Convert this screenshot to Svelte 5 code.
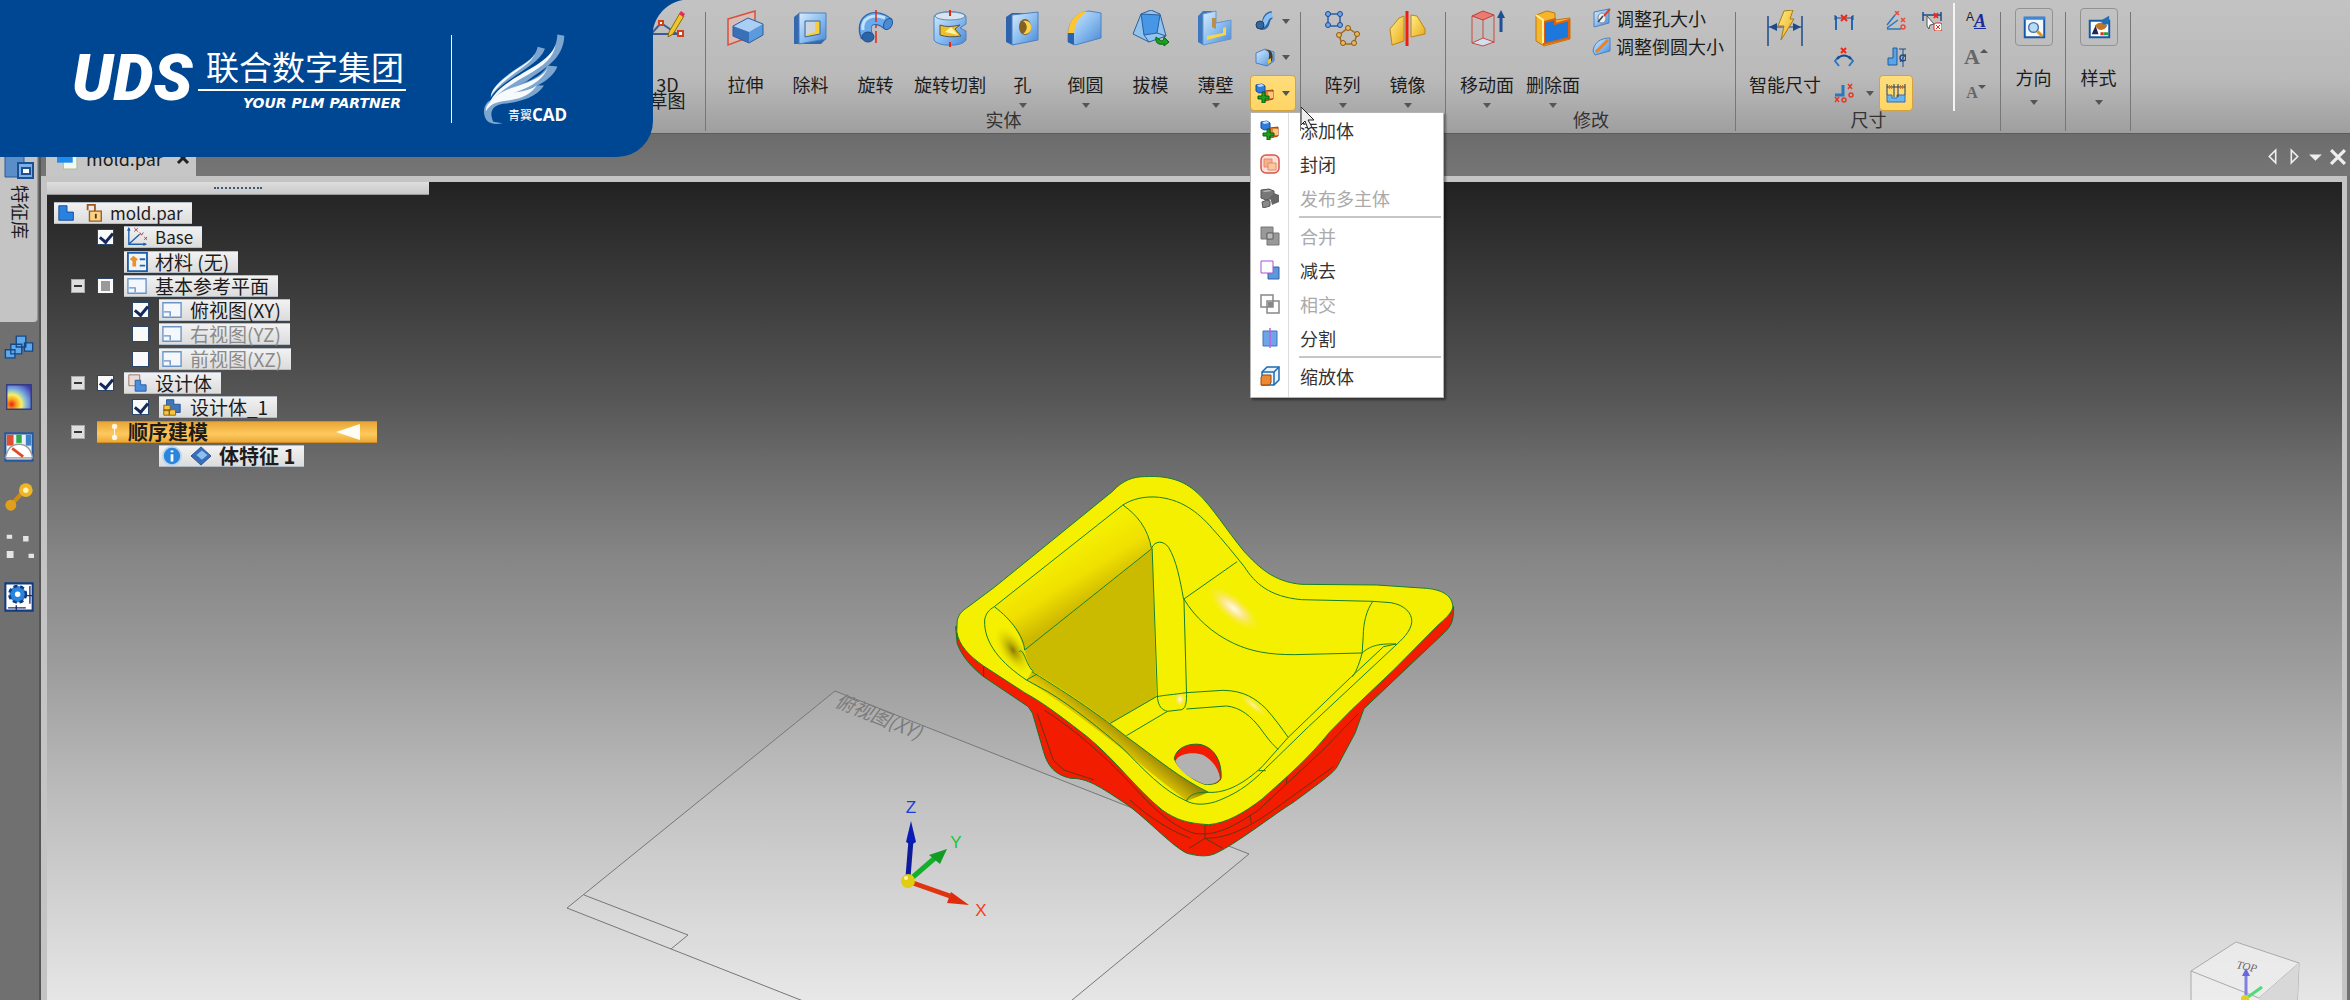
<script lang="ts">
	type MenuItem = { label: string; icon: string; disabled?: boolean; separator?: boolean };
	type TreeRow = {
		text: string;
		icons: string[];
		indent: number;
		expander?: boolean;
		check?: 'on' | 'off' | 'mixed';
		dim?: boolean;
		bold?: boolean;
		active?: boolean;
	};

	// Inner markup of the ribbon icons, drawn on a 36x36 grid
	const big: Record<string, string> = {
		sketch3d: `<path d="M2 24 12 13 28 24Z" fill="none" stroke="#3b5a92" stroke-width="2"/><path d="M20 22 31 3l4 3-11 18-5 3z" fill="#f0c52c" stroke="#8a6a10"/><path d="m30 4 2-3 4 3-2 3z" fill="#e03050"/><path d="M10 11h4v4h-4zM29 21h5v5h-5z" fill="#fff" stroke="#d4401c" stroke-width="2"/>`,
		extrude: `<path d="M1 9 28 1v24L1 35z" fill="#d8bcb8" stroke="#d8503c" stroke-width="1.500"/><path d="m6 16 15-8 15 6-14 8z" fill="#a9d0f4"/><path d="m6 16 16 6v11L6 26z" fill="#3a70b8"/><path d="m22 22 14-8v11l-14 8z" fill="#5c9ade"/><path d="m6 16 15-8 15 6v11l-14 8-16-7z" fill="none" stroke="#2c5e9e"/>`,
		cut: `<path d="m2 7 5-4h27v26l-5 5H2z" fill="#3568ae"/><path d="M7 3h27v26l-27 5z" fill="url(#blue)" stroke="#4a80c2"/><path d="M13 11h15v13l-15 3z" fill="#f6cf38" stroke="#3c66a0"/><path d="M14 12h9v10l-9 3z" fill="#ccd4dc"/>`,
		revolve: `<path d="M10 27C3 9 18 3 31 14" fill="none" stroke="#2a62a8" stroke-width="13"/><path d="M10 26C4 9 18 4 30 13" fill="none" stroke="#6aaaec" stroke-width="11"/><path d="M6 20C4 8 16 3 28 8" fill="none" stroke="#c4e2fa" stroke-width="3"/><ellipse cx="31" cy="14" rx="4" ry="6" fill="#4a8cd4" stroke="#255a9b" transform="rotate(30 31 14)"/><ellipse cx="11" cy="27" rx="6" ry="5" fill="#2c64a8" stroke="#1f4c88"/><path d="M19 0v36" stroke="#e02818" stroke-width="1.500" stroke-dasharray="12 3 3 3"/>`,
		revcut: `<path d="M2 7c0-7 32-7 32 0v7l-6 4 6 3v9c-3 7-29 7-32 0z" fill="url(#blue)" stroke="#4a80c2"/><ellipse cx="18" cy="6" rx="15" ry="4" fill="#d7e5ee" stroke="#678bb0"/><path d="M8 15q8 3 20 0l-5 4 6 7q-12 2-21-1z" fill="#edc02a" stroke="#555"/><path d="m13 22 6-5 7 8z" fill="#fff3a5"/><path d="M18 0v6m0 26v5" stroke="#e02818" stroke-width="2"/>`,
		hole: `<path d="m2 7 6-4h26v26l-26 6-6-3z" fill="#2d62ad"/><path d="M8 5 34 2v28L8 35z" fill="url(#blue)" stroke="#4a80c2"/><ellipse cx="21" cy="17" rx="6" ry="8" fill="#856023"/><path d="M19 11c5 3 5 9 0 13 12 1 10-16 0-13z" fill="#f7d44a"/>`,
		round: `<path d="M1 26C1 10 11 2 22 1l12 2v25L8 35l-7-3z" fill="url(#blue)" stroke="#4d82c0"/><path d="M1 23C2 10 10 2 20 1l-4 4C9 10 8 16 7 24z" fill="#ffc62e"/><path d="M1 23h6v12l-6-3z" fill="#2d62ad"/>`,
		draft: `<path d="M9 4 19 0l9 4 6 22-17 6L1 24z" fill="#90c4ef" stroke="#2d5e9e"/><path d="m9 4 19 1-3 18-13 2z" fill="#4697e6" stroke="#2d5e9e"/><path d="m12 25 5 7M25 23l9 3" stroke="#2d5e9e"/><path d="m24 27 4 3c2 2 4 0 4-3l5 5-5 4v-2c-6 1-9-1-8-7z" fill="#19a01c" stroke="#0b6511"/>`,
		thin: `<path d="m1 6 5-5h13v12l15-3v19L6 35l-5-3z" fill="#3e77bf"/><path d="m6 4 13-3v12l15-3v19L6 35z" fill="url(#blue)" stroke="#6a98cc"/><path d="m10 26 16-3v-5l3-1v8l-19 5z" fill="#f8d448"/><path d="M15 8v9l4 2V8z" fill="#b98d4c"/>`,
		pattern: `<g fill="none" stroke="#2c5da8" stroke-width="1.500"><path d="M4 4h12v12H4z"/><path d="m24 18 9 6-3 10H18l-3-9z" stroke="#a36a18"/></g><g fill="#6fa7e8" stroke="#1c4990"><circle cx="4" cy="4" r="2.500"/><circle cx="16" cy="4" r="2.500"/><circle cx="4" cy="15" r="2.500"/><circle cx="16" cy="15" r="2.500"/></g><g fill="#edb459" stroke="#8a5a14"><circle cx="24" cy="18" r="2.500"/><circle cx="33" cy="24" r="2.500"/><circle cx="30" cy="33" r="2.500"/><circle cx="19" cy="33" r="2.500"/><circle cx="15" cy="25" r="2.500"/></g>`,
		mirror: `<path d="M1 19 10 8l5-2v25L3 35z" fill="url(#gold)" stroke="#b8861c"/><path d="m22 5 6 1 8 13v5l-14 3z" fill="url(#gold)" stroke="#b8861c"/><path d="M18 1v35" stroke="#f01c10" stroke-width="3"/>`,
		moveface: `<path d="M3 6 14 1l11 4-11 5z" fill="#e87c74" stroke="#c43c34"/><path d="M3 6v27m22-28v28M14 10v19" stroke="#cc4840"/><path d="m3 33 11-5 11 4-11 4z" fill="#d0e0ee" stroke="#cc4840"/><path d="M32 22V6" stroke="#1f4f96" stroke-width="3"/><path d="m32 0 4 8h-8z" fill="#1f4f96"/>`,
		delface: `<path d="m1 5 11-4 8 2v7l15-2v21L9 36l-8-5z" fill="#f5b62c" stroke="#c07810"/><path d="m9 12 11-3v5l14-4v18L9 34z" fill="#1c78dc" stroke="#e06010" stroke-width="2"/><path d="m1 5 7 5v23" fill="none" stroke="#fff09a" stroke-width="2"/>`,
		smartdim: `<path d="M1 6v30M35 6v30" stroke="#1e4a8a" stroke-width="1.500"/><path d="M1 17h34" stroke="#1e4a8a"/><path d="m2 17 8-4v8zm32 0-8-4v8z" fill="#1e4a8a"/><path d="m17 1 9-1-3 9h4L14 30l3-14h-6z" fill="url(#gold)" stroke="#a87c10"/>`,
		orient: `<path d="M9 9h20v20H9z" fill="#f4f8fc" stroke="#1458a8" stroke-width="2"/><path d="M8 8h22v3H8z" fill="#3a88d8"/><circle cx="18" cy="19" r="5" fill="#b8dcf8" stroke="#4878a8" stroke-width="1.500"/><path d="m22 23 5 5" stroke="#e0961c" stroke-width="3"/>`,
		style: `<path d="M9 12h20v17H9z" fill="#fff" stroke="#1458a8" stroke-width="2"/><path d="M11 26h7l-3-9z" fill="#1c2850"/><path d="M20 24h3v3h-3z" fill="#e03020"/><path d="M23 24h5v3h-5z" fill="#2a9c3a"/><path d="M14 17q7-6 13 0-3 6-9 4z" fill="#c27428"/><path d="m20 12 9-5v9h-6z" fill="#1e70b8"/>`
	};

	// 20x20 grid
	const small: Record<string, string> = {
		sweep: `<path d="M6 15C14 16 8 5 17 4" fill="none" stroke="#2b65aa" stroke-width="8"/><path d="M5 14C13 15 8 5 17 4" fill="none" stroke="#8cc0f2" stroke-width="5"/><circle cx="5" cy="14" r="4" fill="#34689c" stroke="#1c4070"/>`,
		sweepcut: `<path d="m1 6 9-4 9 3v9l-7 5-11-3z" fill="url(#blue)" stroke="#4a80c2"/><path d="M8 4c7-2 7 3 5 12l4-2c2-8-1-13-9-10z" fill="#4a3a20"/><path d="m13 13 3-2v4l-3 2z" fill="#f2c430"/>`,
		add: `<path d="m1 2 6-1 3 2v6L4 10 1 8z" fill="#2f7ce0" stroke="#134a9c"/><path d="m2 2 5-1 2 2-5 1z" fill="#bfe0ff"/><path d="m10 8 8-1v9l-8 2z" fill="#e8813a" stroke="#9c3c0c"/><path d="M13 9h5v6h-5z" fill="#ffc878"/><path d="M7 9h3v4h4v3h-4v4H7v-4H3v-3h4z" fill="#1da01f" stroke="#0b6010"/>`,
		enclose: `<rect x="1" y="1" width="18" height="18" rx="5" fill="#fbe1da" stroke="#d85648" stroke-width="1.500"/><path d="M4 5h8v8H4z" fill="#f7b08c" stroke="#e08c68"/><path d="M8 9h8v7H8z" fill="#fbc8a0" stroke="#e08c68"/>`,
		publish: `<path d="m1 2 8-1 5 2v7l-8 2-5-2z" fill="#777" stroke="#555"/><path d="m10 9 4-4 5 2v7l-7 3z" fill="#666"/><path d="m2 14 5-2 3 1v5l-7 2z" fill="#8a8a8a" stroke="#555"/><path d="m2 3 7-1 3 1-7 1z" fill="#bbb"/>`,
		union: `<path d="M1 1h12v12H1zM7 7h12v12H7z" fill="#999" stroke="#777"/><path d="M7 7h6v6H7z" fill="#bbb" stroke="#666"/>`,
		subtract: `<path d="M8 7h11v12H8z" fill="#5d97dc" stroke="#3463a8"/><path d="M1 1h12v12H1z" fill="#fff" stroke="#a650d8"/>`,
		intersect: `<path d="M1 1h12v12H1zM7 7h12v12H7z" fill="none" stroke="#888" stroke-width="1.500"/><path d="M8 8h5v5H8z" fill="#888"/>`,
		split: `<path d="M3 3h14v15H3z" fill="#6da5e8" stroke="#3e74bc"/><path d="M10 0v20" stroke="#c060e0" stroke-width="1.500"/>`,
		scale: `<path d="m2 6 5-5h12v13l-5 5H2z" fill="#e8f4ff" stroke="#1c6ab0" stroke-width="1.500"/><path d="M2 6h12v13M14 6l5-5" fill="none" stroke="#1c6ab0" stroke-width="1.500"/><path d="m1 11 2-2h8v8l-2 2H1z" fill="#ec8a34" stroke="#a0480c"/>`,
		holesize: `<path d="m2 4 15-3v14L2 19z" fill="url(#blue)" stroke="#4a80c2"/><ellipse cx="10" cy="10" rx="4" ry="5" fill="#eee" stroke="#888"/><path d="m12 8 6-7" stroke="#e04028" stroke-width="2"/><path d="m6 14 5-6" stroke="#345" stroke-width="1.500"/>`,
		roundsize: `<path d="M1 15C2 7 8 2 18 2v13L3 19z" fill="url(#blue)" stroke="#4a80c2"/><path d="M4 16 16 4" stroke="#e98324" stroke-width="3"/>`,
		dist: `<path d="M2 19V5m16 14V5" stroke="#1e6ab8" stroke-width="2"/><path d="M2 7h16M1 4v5m18-5v5" stroke="#1e4a8a"/><path d="m7 4 6 6m0-6-6 6" stroke="#f02818" stroke-width="2"/>`,
		angle: `<path d="M5 19 1 14l4-5m10 10 4-5-4-5" fill="none" stroke="#2878c0" stroke-width="2"/><path d="M3 12q7-7 14 0" fill="none" stroke="#1e4a8a" stroke-width="2"/><path d="m7 1 5 5m0-5-5 5" stroke="#f02818" stroke-width="2"/>`,
		coord: `<path d="M1 12h8V2" fill="none" stroke="#2878c0" stroke-width="3"/><g fill="none" stroke="#e83828" stroke-width="1.500"><path d="m14 1 4 5m0-5-4 5M1 14l4 5m0-5-4 5"/><circle cx="17" cy="12" r="2"/><circle cx="10" cy="17" r="2"/></g>`,
		angcoord: `<path d="M1 18h14M1 17 12 9M1 14 9 4" stroke="#2878c0" stroke-width="1.500"/><g fill="none" stroke="#f04838" stroke-width="1.500"><path d="m9 0 4 4m0-4-4 4m6 3 4 4m0-4-4 4"/><circle cx="17" cy="16" r="2"/></g>`,
		symdia: `<path d="M2 18h9V1H7v10H2z" fill="#58a4e4" stroke="#1e5aa0"/><path d="M13 2h7m-3 0v18" stroke="#1e4a8a"/><circle cx="17" cy="11" r="3" fill="none" stroke="#1e4a8a" stroke-width="1.500"/><path d="m14 15 6-8" stroke="#1e4a8a"/>`,
		autodim: `<path d="M1 12h5v3h5v-3h8v7H1z" fill="#6cb4ee" stroke="#2a70b8"/><path d="M1 1v11M8 1v13M12 1v13M19 1v11M1 4h18" stroke="#1e3a60"/><path d="m3 2 3 4m0-4-3 4m11-4 3 4m0-4-3 4" stroke="#d86818"/>`,
		attach: `<path d="M1 1v9M19 1v9M1 4h18" stroke="#1e4a8a" stroke-width="1.500"/><path d="m12 2 4 5m0-5-4 5" stroke="#f02818" stroke-width="2"/><path d="m5 5 7 8-4 1-1 4-2-3z" fill="#fff" stroke="#555"/><rect x="12" y="12" width="8" height="8" rx="2" fill="#fff" stroke="#d03020"/><path d="m14 14 4 4m0-4-4 4" stroke="#d03020"/>`
	};

	// 22x22 grid, shared by the feature tree and the dock
	const tree: Record<string, string> = {
		part: `<path d="M2 3h9v7h7v9H2z" fill="#2a82e0" stroke="#154a94"/>`,
		base: `<path d="M2 1v18h19M3 18 14 8" fill="none" stroke="#2060b0" stroke-width="1.500"/><path d="m2 0 2 4H0zM22 19l-4 2v-4z" fill="#2060b0"/><path d="m8 1 4 4m0-4-4 4m6 1 2 3 2-3m1 5 3 3m0-3-3 3" stroke="#a83030" fill="none"/>`,
		material: `<path d="M1 1h21v20H1z" fill="#eef4fa" stroke="#1c5ca8" stroke-width="2"/><path d="m7 4 5 4-2 2v6H6v-6L3 8z" fill="#e8922c"/><path d="M14 8h6m-6 7h6" stroke="#2864a8" stroke-width="2"/>`,
		plane: `<path d="M1 3h20v16H1z" fill="#f4f8fd" stroke="#6a94c8" stroke-width="1.500"/><path d="M2 13h7v5" fill="none" stroke="#6a94c8" stroke-width="1.500"/>`,
		bodies: `<path d="M2 2h12v12H2z" fill="#e8dcd6" stroke="#9c6c60"/><path d="M9 8h6v5h6v7H9z" fill="#4a8ee0" stroke="#2458a0"/>`,
		body: `<path d="M5 3h8v5h7v9H5z" fill="#3f78c0" stroke="#234f90"/><path d="M2 9h7v6H2zM2 14h6v6H2zM8 14h7v6H8z" fill="#f8c63c" stroke="#875c10"/>`,
		dots: `<circle cx="16" cy="5" r="3" fill="#fff4d8"/><circle cx="16" cy="17" r="3" fill="#fff4d8"/><path d="M16 5v12" stroke="#fff" />`,
		info: `<circle cx="11" cy="11" r="10" fill="#2a86dc" stroke="#b8d4ee" stroke-width="2"/><path d="M11 9v8m0-12v2" stroke="#fff" stroke-width="3"/>`,
		feature: `<path d="m0 11 11-10 11 10-11 10z" fill="#3a6eb8" stroke="#24508c"/><path d="m6 10 6-5 6 5-6 5z" fill="#8cc0f0"/>`,
		pieces: `<g fill="#5ea8ec" stroke="#164888"><path d="M9 3h7v8H9zM15 8h6v6h-6zM5 9h8v7H5zM1 13h7v6H1z"/></g>`,
		heat: `<path d="M2 2h18v18H2z" fill="url(#heat)" stroke="#333a80"/>`,
		gauge: `<path d="M1 1h20v20H1z" fill="#e8f0f8" stroke="#2458a0" stroke-width="1.500"/><path d="M2 2h5v8H2z" fill="#e05030"/><path d="M9 2h4v6H9z" fill="#30a848"/><path d="M16 2h4v8h-4z" fill="#4080c8"/><path d="M1 19q2-10 10-10t10 10z" fill="#fff" stroke="#999"/><path d="m6 12 8 6" stroke="#e04828" stroke-width="2"/>`,
		link: `<path d="M5 17 16 5" stroke="#cc8c14" stroke-width="3"/><circle cx="16" cy="6" r="5" fill="#f0b428"/><circle cx="5" cy="17" r="4" fill="#dfa01c"/><circle cx="16" cy="6" r="2" fill="#fff4b0"/>`,
		nodes: `<path d="M2 2h4v3H2zM14 3h4v4h-4zM2 14h5v5H2zM18 16h4v3h-4z" fill="#e4e4e4"/>`,
		gear: `<path d="M1 1h20v20H1z" fill="#fff" stroke="#123c80" stroke-width="1.500"/><circle cx="10" cy="9" r="6" fill="#2a84dc" stroke="#123c80" stroke-width="2" stroke-dasharray="3 2"/><circle cx="10" cy="9" r="5" fill="#2a84dc"/><circle cx="10" cy="9" r="2" fill="#fff"/><path d="M19 3v13M3 19h13M16 10h5M9 17v4" stroke="#1c2c70"/>`
	};

	const solidButtons = [
		{ label: '拉伸', icon: 'extrude' },
		{ label: '除料', icon: 'cut' },
		{ label: '旋转', icon: 'revolve' },
		{ label: '旋转切割', icon: 'revcut' },
		{ label: '孔', icon: 'hole', arrow: true },
		{ label: '倒圆', icon: 'round', arrow: true },
		{ label: '拔模', icon: 'draft' },
		{ label: '薄壁', icon: 'thin', arrow: true }
	];

	const menuItems: MenuItem[] = [
		{ label: '添加体', icon: 'add' },
		{ label: '封闭', icon: 'enclose' },
		{ label: '发布多主体', icon: 'publish', disabled: true, separator: true },
		{ label: '合并', icon: 'union', disabled: true },
		{ label: '减去', icon: 'subtract' },
		{ label: '相交', icon: 'intersect', disabled: true },
		{ label: '分割', icon: 'split', separator: true },
		{ label: '缩放体', icon: 'scale' }
	];

	const rows: TreeRow[] = [
		{ text: 'Base', icons: ['base'], indent: 43, check: 'on' },
		{ text: '材料 (无)', icons: ['material'], indent: 70 },
		{ text: '基本参考平面', icons: ['plane'], indent: 17, expander: true, check: 'mixed' },
		{ text: '俯视图(XY)', icons: ['plane'], indent: 78, check: 'on' },
		{ text: '右视图(YZ)', icons: ['plane'], indent: 78, check: 'off', dim: true },
		{ text: '前视图(XZ)', icons: ['plane'], indent: 78, check: 'off', dim: true },
		{ text: '设计体', icons: ['bodies'], indent: 17, expander: true, check: 'on' },
		{ text: '设计体_1', icons: ['body'], indent: 78, check: 'on' },
		{ text: '顺序建模', icons: ['dots'], indent: 17, expander: true, bold: true, active: true },
		{ text: '体特征 1', icons: ['info', 'feature'], indent: 105, bold: true }
	];

	const dock = [
		{ label: '零件族', icon: 'pieces' },
		{ label: '仿真', icon: 'heat' },
		{ label: '传感器', icon: 'gauge' },
		{ label: '链接', icon: 'link' },
		{ label: '节点', icon: 'nodes' },
		{ label: '工程参考', icon: 'gear' }
	];

	let menuOpen = $state(true);
</script>

{#snippet bigButton(label: string, icon: string, arrow = false)}
	<button class="big">
		<svg class="big-icon" viewBox="0 0 37 37" aria-hidden="true">{@html big[icon]}</svg>
		<span class="big-label">{label}</span>
		{#if arrow}<i class="arrow"></i>{/if}
	</button>
{/snippet}

{#snippet smallButton(label: string, icon: string, highlight = false)}
	<button class="small" class:highlight aria-label={label}>
		<svg class="small-icon" viewBox="0 0 20 20" aria-hidden="true">{@html small[icon]}</svg>
	</button>
{/snippet}

<svg class="defs" aria-hidden="true">
	<defs>
		<linearGradient id="blue" x1="0" y1="0" x2="1" y2="1">
			<stop offset="0" stop-color="#d8ebfb" />
			<stop offset="0.5" stop-color="#8dbff0" />
			<stop offset="1" stop-color="#4a88d4" />
		</linearGradient>
		<linearGradient id="gold" x1="0" y1="0" x2="1" y2="1">
			<stop offset="0" stop-color="#fff08a" />
			<stop offset="1" stop-color="#eba918" />
		</linearGradient>
		<radialGradient id="heat" cx="0.2" cy="0.8" r="1">
			<stop offset="0" stop-color="#f02010" />
			<stop offset="0.2" stop-color="#f8a020" />
			<stop offset="0.4" stop-color="#f8f060" />
			<stop offset="0.6" stop-color="#80b8e0" />
			<stop offset="1" stop-color="#4038b0" />
		</radialGradient>
	</defs>
</svg>

<div class="app">
	<header class="ribbon">
		<div class="group sketch">
			<button class="big">
				<svg class="big-icon" viewBox="0 0 37 37" aria-hidden="true">{@html big.sketch3d}</svg>
				<span class="big-label stacked">3D<br />草图</span>
			</button>
		</div>

		<div class="group">
			<div class="body solid">
				{#each solidButtons as b}
					{@render bigButton(b.label, b.icon, b.arrow)}
				{/each}
				<div class="column split-column">
					<button class="split" aria-label="扫掠">
						<svg class="small-icon" viewBox="0 0 20 20" aria-hidden="true">{@html small.sweep}</svg>
						<i class="arrow"></i>
					</button>
					<button class="split" aria-label="扫掠除料">
						<svg class="small-icon" viewBox="0 0 20 20" aria-hidden="true">{@html small.sweepcut}</svg>
						<i class="arrow"></i>
					</button>
					<button class="split highlight" aria-label="添加体" aria-expanded={menuOpen} onclick={() => (menuOpen = !menuOpen)}>
						<svg class="small-icon" viewBox="0 0 20 20" aria-hidden="true">{@html small.add}</svg>
						<i class="arrow"></i>
					</button>
					{#if menuOpen}
						<div class="menu" role="menu">
							{#each menuItems as item}
								<button class="menu-item" role="menuitem" disabled={item.disabled}>
									<svg class="small-icon" viewBox="0 0 20 20" aria-hidden="true">{@html small[item.icon]}</svg>
									{item.label}
								</button>
								{#if item.separator}<hr />{/if}
							{/each}
						</div>
						<svg class="cursor" viewBox="0 0 16 24" aria-hidden="true">
							<path d="M1 1v18l4-4 3 8 4-2-4-7h6z" fill="#eee" stroke="#222" />
						</svg>
					{/if}
				</div>
			</div>
			<div class="group-label">实体</div>
		</div>

		<div class="group">
			<div class="body pattern">
				{@render bigButton('阵列', 'pattern', true)}
				{@render bigButton('镜像', 'mirror', true)}
			</div>
		</div>

		<div class="group">
			<div class="body modify">
				{@render bigButton('移动面', 'moveface', true)}
				{@render bigButton('删除面', 'delface', true)}
				<div class="list">
					<button class="list-item">
						<svg class="small-icon" viewBox="0 0 20 20" aria-hidden="true">{@html small.holesize}</svg>
						调整孔大小
					</button>
					<button class="list-item">
						<svg class="small-icon" viewBox="0 0 20 20" aria-hidden="true">{@html small.roundsize}</svg>
						调整倒圆大小
					</button>
				</div>
			</div>
			<div class="group-label">修改</div>
		</div>

		<div class="group">
			<div class="body dimension">
				{@render bigButton('智能尺寸', 'smartdim')}
				<div class="column">
					{@render smallButton('间距', 'dist')}
					{@render smallButton('夹角', 'angle')}
					{@render smallButton('坐标尺寸', 'coord')}
				</div>
				<div class="column end">
					<button class="small drop" aria-label="更多坐标尺寸"><i class="arrow"></i></button>
				</div>
				<div class="column">
					{@render smallButton('角度坐标', 'angcoord')}
					{@render smallButton('对称直径', 'symdia')}
					{@render smallButton('自动尺寸', 'autodim', true)}
				</div>
				<div class="column">
					{@render smallButton('附加尺寸', 'attach')}
				</div>
				<div class="column letters">
					<button class="small" aria-label="样式"><span class="letter-sm">A</span><span class="letter-style">A</span></button>
					<button class="small" aria-label="增大字体"><span class="letter-lg">A</span><i class="arrow up"></i></button>
					<button class="small" aria-label="减小字体"><span class="letter-md">A</span><i class="arrow raised"></i></button>
				</div>
			</div>
			<div class="group-label">尺寸</div>
		</div>

		<div class="group framed">
			{@render bigButton('方向', 'orient', true)}
		</div>
		<div class="group framed">
			{@render bigButton('样式', 'style', true)}
		</div>
	</header>

	<div class="main">
		<aside class="dock">
			<button class="dock-tab">
				<svg viewBox="0 0 30 24" aria-hidden="true">
					<path d="M1 0h19v22H1z" fill="#5a8ec8" stroke="#2a5a98" />
					<path d="M14 8h15v15H14z" fill="#79b0e6" stroke="#1c4f94" stroke-width="2" />
					<path d="M18 13h8v6h-8z" fill="#fff" stroke="#1c4f94" stroke-width="2" />
				</svg>
				<span>特征库</span>
			</button>
			{#each dock as d}
				<button class="dock-button" aria-label={d.label}>
					<svg viewBox="0 0 22 22" aria-hidden="true">{@html tree[d.icon]}</svg>
				</button>
			{/each}
		</aside>

		<div class="document">
			<div class="tabs">
				<div class="tab">
					<svg viewBox="0 0 22 22" aria-hidden="true">
						<path d="M7 5h13v16H7z" fill="#f4f8f0" stroke="#a8c0a0" />
						<path d="M1 1h15v14H1z" fill="#1e8cec" />
					</svg>
					<span>mold.par</span>
					<button class="tab-close" aria-label="关闭">
						<svg viewBox="0 0 14 14" aria-hidden="true"><path d="m2 2 10 10m0-10L2 12" stroke="#222" stroke-width="3" /></svg>
					</button>
				</div>
				<div class="tab-tools">
					<button aria-label="上一个"><svg viewBox="0 0 16 16"><path d="M11 2v12L5 8z" fill="none" stroke="#eee" stroke-width="1.500" /></svg></button>
					<button aria-label="下一个"><svg viewBox="0 0 16 16"><path d="M5 2v12l6-6z" fill="none" stroke="#eee" stroke-width="1.500" /></svg></button>
					<button aria-label="窗口列表"><svg viewBox="0 0 16 16"><path d="M1 6h12l-6 6z" fill="#eee" /></svg></button>
					<button aria-label="关闭窗口"><svg viewBox="0 0 16 16"><path d="m1 2 13 13m0-13L1 15" stroke="#eee" stroke-width="3" /></svg></button>
				</div>
			</div>

			<div class="viewport">
				<svg class="scene" viewBox="47 182 2295 818" preserveAspectRatio="xMidYMin slice" aria-label="mold">
					<defs>
						<linearGradient id="wall" gradientUnits="userSpaceOnUse" x1="360" y1="320" x2="450" y2="455">
							<stop offset="0" stop-color="#f4ee00" />
							<stop offset="0.5" stop-color="#f0e000" />
							<stop offset="1" stop-color="#cdb800" />
						</linearGradient>
						<linearGradient id="valley" gradientUnits="userSpaceOnUse" x1="560" y1="850" x2="490" y2="930">
							<stop offset="0" stop-color="#968208" />
							<stop offset="0.5" stop-color="#dcc400" />
							<stop offset="1" stop-color="#f4f000" />
						</linearGradient>
						<radialGradient id="corner">
							<stop offset="0" stop-color="#6e5c00" stop-opacity="0.8" />
							<stop offset="1" stop-color="#e8d800" stop-opacity="0" />
						</radialGradient>
						<radialGradient id="shine">
							<stop offset="0" stop-color="#fffbe0" />
							<stop offset="0.4" stop-color="#fbe780" />
							<stop offset="1" stop-color="#f4f000" stop-opacity="0" />
						</radialGradient>
					</defs>

					<!-- reference plane XY -->
					<path d="M835 691 1249 854 1060 1010H826L567 908Z" fill="#fff" fill-opacity="0.08" stroke="#777" />
					<path d="M584 895 688 935 671 949" fill="none" stroke="#777" />
					<text x="834" y="706" class="plane-name" transform="rotate(22 834 706)">俯视图(XY)</text>

					<!-- mold body, on its own grid -->
					<g transform="translate(930 450) scale(.35714 .33333)" class="mold">
						<path class="red" d="M72 530 76 580C90 622 120 655 150 680L275 770 287 790 318 905C330 950 350 975 395 985 440 985 470 1005 560 1070 620 1120 680 1190 720 1210 755 1220 780 1220 800 1210 860 1180 960 1095 1020 1055 1070 1015 1130 970 1140 950L1190 850 1215 776 1440 548C1460 528 1467 510 1466 470Z" />
						<path class="seam" d="M300 790 345 930 375 960 460 990M320 780C420 850 500 930 570 1010 630 1080 680 1130 740 1150 800 1160 850 1130 920 1080L1100 900 1200 790M560 1050C620 1110 690 1150 730 1165M770 1125V1165L725 1195M770 1165 820 1195M770 1165C840 1165 900 1130 1000 1050L1130 950M150 650V680M895 1095 900 1120M1000 970 998 1000" />
						<path class="yellow" d="M76 515C78 495 90 482 105 472L180 412 510 125C540 90 570 80 600 80 680 75 720 100 750 130 790 170 830 240 880 305 920 350 960 395 1040 403L1250 405 1390 415C1440 420 1462 440 1464 470 1462 490 1440 508 1420 528L1300 658 1180 780 1120 845C1060 925 1000 980 930 1047 880 1088 830 1120 780 1124 720 1120 690 1110 650 1080 580 1020 520 930 440 860 380 810 320 760 265 728L150 648C110 618 80 585 75 545Z" />
						<path d="M180 470 540 165C580 195 605 235 620 295L265 600C255 560 230 510 180 470Z" fill="url(#wall)" />
						<ellipse cx="232" cy="600" rx="38" ry="80" fill="url(#corner)" transform="rotate(-30 232 600)" />
						<path d="M285 665C400 740 480 800 550 860 640 930 700 985 780 1027L720 1053C600 960 500 850 270 690Z" fill="url(#valley)" />
						<path class="face" d="M265 600 622 295 634 740 505 820C450 775 370 715 290 665 278 650 270 630 265 600Z" />
						<ellipse cx="850" cy="475" rx="100" ry="38" fill="url(#shine)" transform="rotate(42 850 475)" />
						<ellipse cx="700" cy="748" rx="16" ry="24" fill="url(#shine)" />
						<ellipse cx="905" cy="765" rx="60" ry="16" fill="url(#shine)" transform="rotate(42 905 765)" opacity="0.6" />
						<path class="edge" d="M180 470 540 165C570 145 600 140 630 141 700 145 750 185 790 235 820 270 850 310 880 350 910 400 950 440 1040 449L1240 454 1290 458C1330 465 1350 490 1349 515 1347 545 1320 570 1300 590L1185 705 1060 830 940 955C890 1010 850 1035 800 1055 760 1068 735 1062 718 1053 650 1020 600 960 540 895 480 840 400 770 330 725L270 690C200 640 150 580 153 510 156 490 165 480 180 470Z" />
						<path class="edge" d="M180 470C230 510 262 560 265 600M250 605C262 590 270 650 290 665M270 690 300 672M265 600 622 295M540 165C580 195 610 235 620 295 630 270 655 272 668 292 690 330 700 390 710 447M622 295 637 745C640 770 650 780 665 784L705 779C715 775 720 760 718 720L711 447 860 335M711 447C740 500 790 550 850 580 900 605 950 614 1020 614L1210 609 1213 560C1213 520 1222 480 1240 454M1210 609C1200 650 1190 670 1183 680M1210 609C1230 590 1250 580 1305 582M1305 582 1270 590 1180 680 1003 862 930 950C880 1000 830 1030 780 1027M634 740C660 735 680 734 718 728L820 721C880 722 910 745 940 775 965 805 985 835 1003 862M505 820 634 740M550 857 665 784M718 777 830 768C870 772 900 800 925 835 945 865 960 885 975 898M718 1053C725 1035 745 1025 780 1027M920 962H940M285 665C400 740 480 800 550 860 640 930 700 985 780 1027" />
						<path class="red" d="M684 925C690 890 730 878 760 884 800 895 818 940 815 985 810 1000 790 1005 770 1003 730 990 690 950 684 925Z" />
						<path d="M687 932C700 908 740 905 765 915 790 930 808 955 812 985 805 1003 780 1005 765 1001 725 985 695 960 687 932Z" fill="#b2b2b2" />
					</g>

					<!-- coordinate triad -->
					<path d="M908 877 911 840" stroke="#0c1c9c" stroke-width="5" />
					<path d="m911 821 5 21q-5 4-10 0z" fill="#0a1cb8" />
					<path d="m913 877 23-20" stroke="#14b02c" stroke-width="5" />
					<path d="m947 849-7 15-11-9z" fill="#129c26" />
					<path d="m913 883 37 13" stroke="#e03410" stroke-width="5" />
					<path d="m969 905-22-2 4-11z" fill="#e02c0c" />
					<circle cx="908" cy="881" r="7" fill="#e0cc10" />
					<circle cx="906" cy="878" r="2" fill="#fff8b0" />
					<text x="911" y="813" class="axis" fill="#1840d8">Z</text>
					<text x="956" y="848" class="axis" fill="#16c838">Y</text>
					<text x="981" y="916" class="axis" fill="#f04018">X</text>

					<!-- view cube -->
					<path d="M2191 971 2236 942 2299 963 2297 1010H2191Z" fill="#f0f0f0" fill-opacity="0.7" stroke="#aaa" />
					<path d="m2191 971 68 27 40-35" fill="none" stroke="#aaa" />
					<path d="m2259 998 40-35-2 47h-38z" fill="#d8d8d8" />
					<text x="2236" y="968" class="cube-name" transform="rotate(12 2236 968)">TOP</text>
					<path d="M2246 998v-24" stroke="#8080e0" stroke-width="3" />
					<path d="m2246 968 4 8h-8z" fill="#6868d8" />
					<path d="m2248 997 14-10" stroke="#50dc78" stroke-width="3" />
					<circle cx="2245" cy="999" r="4" fill="#e0d020" />
				</svg>

				<div class="panel">
					<div class="grip"><i></i></div>
					<div class="tree">
						<div class="tree-row">
							<span class="node">
								<svg viewBox="0 0 22 22" aria-hidden="true">{@html tree.part}</svg>
								<svg class="lock" viewBox="0 0 18 22" aria-hidden="true">
									<path d="M2 8V2h8v7" fill="none" stroke="#9c5a20" stroke-width="2" />
									<path d="M4 9h13v11H4z" fill="#fbd184" stroke="#9c5a20" stroke-width="1.500" />
									<path d="M11 12v5" stroke="#5a3410" stroke-width="2" />
								</svg>
								mold.par
							</span>
						</div>
						{#each rows as row, i}
							<div class="tree-row" style="padding-left: {row.indent}px">
								{#if row.expander}
									<button class="expander" aria-label="折叠"></button>
								{/if}
								{#if row.check}
									<input type="checkbox" id="node-{i}" checked={row.check === 'on'} class:mixed={row.check === 'mixed'} />
								{/if}
								<label class="node" for={row.check ? `node-${i}` : undefined} class:dim={row.dim} class:bold={row.bold} class:active={row.active}>
									{#each row.icons as icon}
										<svg viewBox="0 0 22 22" aria-hidden="true">{@html tree[icon]}</svg>
									{/each}
									{row.text}
									{#if row.active}
										<svg class="pointer" viewBox="0 0 24 16" aria-hidden="true"><path d="M0 8 24 0v16z" fill="#fffdf4" /></svg>
									{/if}
								</label>
							</div>
						{/each}
					</div>
				</div>
			</div>
		</div>
	</div>

	<div class="banner">
		<div class="uds">UDS</div>
		<div class="company">
			<div class="company-name">联合数字集团</div>
			<div class="slogan">YOUR PLM PARTNER</div>
		</div>
		<div class="qingyi">
			<svg viewBox="1260 0 300 290" aria-hidden="true">
				<g fill="#7ca5cf">
					<path d="M1492 10 1513 14C1510 85 1455 110 1400 150 1340 180 1300 205 1290 225 1300 190 1350 150 1400 120 1460 90 1490 60 1492 10Z" />
					<path d="M1433 47 1455 53C1440 90 1400 110 1350 145 1320 165 1300 185 1292 200 1290 170 1340 130 1380 105 1415 85 1428 70 1433 47Z" />
					<path d="M1462 103 1492 106C1475 150 1420 170 1380 185 1330 205 1300 215 1280 240 1285 200 1330 175 1380 160 1420 145 1450 130 1462 103Z" />
					<path d="M1420 162 1452 163C1430 200 1370 215 1330 218 1300 222 1285 240 1300 272L1328 276C1300 282 1275 278 1272 245 1270 205 1310 195 1350 190 1385 185 1408 175 1420 162Z" />
				</g>
				<g fill="#f6fafd">
					<path d="M1487 40C1470 90 1400 115 1350 150 1320 170 1300 190 1290 212 1320 180 1360 155 1405 130 1455 100 1480 80 1487 40Z" />
					<path d="M1425 68C1410 95 1370 110 1335 140 1310 160 1295 178 1293 195 1310 165 1345 140 1375 118 1405 98 1418 85 1425 68Z" />
					<path d="M1464 108C1450 140 1400 155 1350 172 1310 188 1290 205 1282 232 1300 208 1350 190 1395 172 1430 155 1455 135 1464 108Z" />
					<path d="M1430 163C1400 185 1360 180 1320 195 1290 205 1275 225 1278 240 1290 215 1320 210 1350 207 1390 202 1415 185 1430 163Z" />
				</g>
			</svg>
			<div class="qingyi-name">青翼<b>CAD</b></div>
		</div>
		<i class="notch"></i>
	</div>
</div>

<style>
	:global(body) {
		background: #717171;
		font-family: 'Noto Sans CJK SC', 'Noto Sans', sans-serif;
		color: #1c1c1c;
	}
	* {
		box-sizing: border-box;
	}
	button {
		background: none;
		border: 0;
		padding: 0;
		margin: 0;
		font: inherit;
		color: inherit;
		cursor: pointer;
	}
	svg {
		display: block;
		flex: none;
	}
	.defs {
		position: absolute;
		width: 0;
		height: 0;
	}
	.app {
		position: relative;
		display: flex;
		flex-direction: column;
		height: 100vh;
		min-height: 640px;
		overflow: hidden;
	}

	/* ribbon */
	.ribbon {
		position: relative;
		z-index: 2;
		display: flex;
		flex: none;
		background: linear-gradient(#c3c3c3, #b9b9b9 60%, #9e9e9e);
		border-bottom: 1px solid #5c5c5c;
		font-size: 18px;
		line-height: 22px;
	}
	.group {
		position: relative;
		display: flex;
		flex-direction: column;
		flex: none;
		height: 133px;
		padding-top: 3px;
	}
	.group::after {
		content: '';
		width: 1px;
		background: #777;
		position: absolute;
		right: 0;
		top: 12px;
		bottom: 2px;
	}
	.sketch {
		width: 706px;
		align-items: flex-end;
		padding-right: 6px;
	}
	.sketch .big {
		width: 65px;
	}
	.body {
		display: grid;
		height: 108px;
		align-items: start;
	}
	.solid {
		grid-template-columns: repeat(3, 65px) 84px 61px repeat(3, 65px) 48px;
		padding: 0 5px 0 7px;
	}
	.pattern {
		grid-template-columns: 65px 65px;
		padding: 0 6px 0 9px;
	}
	.modify {
		grid-template-columns: 66px 66px auto;
		padding: 0 12px 0 8px;
	}
	.dimension {
		grid-template-columns: 84px 34px 18px 34px 38px 46px;
		padding: 0 4px 0 7px;
	}
	.group-label {
		text-align: center;
		line-height: 16px;
		color: #333;
	}
	.big {
		display: flex;
		flex-direction: column;
		align-items: center;
		padding-top: 7px;
		white-space: nowrap;
	}
	.big-icon {
		width: 37px;
		height: 37px;
	}
	.big-label {
		margin-top: 26px;
	}
	.stacked {
		line-height: 16px;
		margin-top: 29px;
	}
	.arrow {
		flex: none;
		width: 0;
		height: 0;
		border: 4px solid transparent;
		border-top: 5px solid #555;
		border-bottom-width: 0;
	}
	.big .arrow {
		margin-top: 8px;
	}
	.arrow.up {
		border: 4px solid transparent;
		border-bottom-color: #555;
		border-top-width: 0;
		align-self: flex-start;
		margin-top: 10px;
	}
	.arrow.raised {
		border-width: 4px 4px 0;
		align-self: flex-start;
		margin-top: 10px;
	}
	.column {
		position: relative;
		display: flex;
		flex-direction: column;
	}
	.column.end {
		justify-content: flex-end;
		align-self: stretch;
	}
	.split-column {
		margin-left: 2px;
	}
	.split {
		display: flex;
		align-items: center;
		gap: 7px;
		height: 36px;
		padding-left: 5px;
	}
	.small {
		display: flex;
		align-items: center;
		justify-content: center;
		height: 36px;
	}
	.small-icon {
		width: 20px;
		height: 20px;
	}
	.highlight {
		background: linear-gradient(#ffdd7c, #ffd565);
		border: 1px solid #d3a340;
		border-radius: 4px;
	}
	.split.highlight {
		padding-left: 4px;
	}
	.letters {
		margin-left: 2px;
		border-left: 2px solid #f4f4f4;
	}
	.letters .small {
		font-family: 'Liberation Serif', serif;
		font-weight: bold;
		color: #666;
	}
	.letter-sm {
		font: 12px 'Liberation Sans', sans-serif;
		color: #222;
		align-self: flex-start;
		margin-top: 7px;
	}
	.letter-style {
		font-size: 18px;
		font-style: italic;
		color: #1a2a98;
		text-decoration: underline;
	}
	.letter-lg {
		font-size: 22px;
	}
	.letter-md {
		font-size: 16px;
	}
	.list {
		display: flex;
		flex-direction: column;
		padding: 1px 0 0 6px;
	}
	.list-item {
		display: flex;
		align-items: center;
		gap: 4px;
		height: 28px;
	}
	.framed {
		width: 65px;
	}
	.framed .big {
		padding-top: 5px;
	}
	.framed .big-icon {
		border: 1px solid #929292;
		border-radius: 4px;
		width: 38px;
		height: 38px;
	}
	.framed .big-label {
		margin-top: 20px;
	}
	.framed .arrow {
		margin-top: 12px;
	}

	.menu {
		position: absolute;
		top: 109px;
		left: 0;
		width: 194px;
		padding: 0 0 4px;
		background: linear-gradient(90deg, #fff 37px, #ddd 37px, #ddd 38px, #fff 38px);
		border: 1px solid #b4b4b4;
		box-shadow: 2px 2px 2px rgba(0, 0, 0, 0.4);
		display: flex;
		flex-direction: column;
	}
	.menu-item {
		display: flex;
		align-items: center;
		gap: 20px;
		height: 34px;
		padding-left: 9px;
		color: #333;
	}
	.menu-item:disabled {
		color: #aaa;
	}
	.menu hr {
		height: 2px;
		margin: 1px 2px 1px 48px;
		border: 0;
		background: #c6c6c6;
	}
	.cursor {
		position: absolute;
		left: 50px;
		top: 103px;
		width: 16px;
		height: 24px;
	}

	/* dock */
	.main {
		flex: 1;
		display: flex;
		min-height: 0;
	}
	.dock {
		flex: none;
		width: 41px;
		border-right: 2px solid #555;
		background: #707070;
		display: flex;
		flex-direction: column;
		align-items: flex-start;
	}
	.dock-tab {
		width: 38px;
		height: 188px;
		padding: 21px 0 0 4px;
		background: #c4c4c4;
		border-radius: 0 0 4px 0;
		border-right: 1px solid #999;
		font-size: 18px;
		line-height: 22px;
		display: flex;
		flex-direction: column;
		align-items: flex-start;
		gap: 6px;
	}
	.dock-tab svg {
		width: 30px;
		height: 24px;
	}
	.dock-tab span {
		writing-mode: vertical-rl;
		text-orientation: sideways;
		margin-left: 6px;
	}
	.dock-button {
		height: 50px;
		padding-left: 4px;
	}
	.dock-button svg {
		width: 30px;
		height: 30px;
	}

	/* document */
	.document {
		flex: 1;
		display: flex;
		flex-direction: column;
		min-width: 0;
	}
	.tabs {
		flex: none;
		height: 42px;
		display: flex;
		justify-content: space-between;
		padding-left: 5px;
		background: linear-gradient(#6c6c6c, #767676);
	}
	.tab {
		width: 150px;
		display: flex;
		align-items: center;
		gap: 7px;
		padding: 6px 0 0 10px;
		background: #c6c6c6;
		font-size: 18px;
		line-height: 24px;
	}
	.tab svg {
		width: 23px;
		height: 23px;
	}
	.tab-close {
		margin-left: 6px;
	}
	.tab-close svg {
		width: 14px;
		height: 14px;
	}
	.tab-tools {
		display: flex;
		align-items: center;
		gap: 5px;
		padding: 2px 3px 0 0;
	}
	.tab-tools svg {
		width: 17px;
		height: 17px;
	}
	.viewport {
		position: relative;
		flex: 1;
		min-height: 0;
		overflow: hidden;
		border: solid #c4c4c4;
		border-width: 6px 5px 0 6px;
		margin-right: 3px;
		background: linear-gradient(#222 0%, #393939 12%, #555 26%, #6a6a6a 34%, #868686 46%, #9c9c9c 59%, #bcbcbc 75%, #d2d2d2 88%, #e6e6e6 100%);
	}
	.scene {
		position: absolute;
		inset: 0;
		width: 100%;
		height: 100%;
	}
	.mold path {
		vector-effect: non-scaling-stroke;
	}
	.red {
		fill: #f21c00;
		stroke: #17702a;
	}
	.seam {
		fill: none;
		stroke: #6b3210;
	}
	.yellow {
		fill: #f4f000;
		stroke: #17802a;
	}
	.face {
		fill: #cabb00;
	}
	.edge {
		fill: none;
		stroke: #17802a;
	}
	.axis {
		font: 17px 'Liberation Sans', sans-serif;
		text-anchor: middle;
	}
	.plane-name {
		font: italic 19px 'Noto Sans CJK SC', sans-serif;
		fill: #7c7c7c;
	}
	.cube-name {
		font: italic 11px 'Liberation Serif', serif;
		fill: #666;
	}

	/* feature tree */
	.panel {
		position: relative;
		width: 382px;
	}
	.grip {
		height: 13px;
		background: linear-gradient(#dedede, #c8c8c8);
		border-bottom: 1px solid #999;
		display: flex;
		justify-content: center;
		align-items: center;
	}
	.grip i {
		width: 48px;
		border-top: 2px dotted #3c5878;
	}
	.tree {
		display: flex;
		flex-direction: column;
		justify-content: space-between;
		height: 265px;
		margin: 7px 0 0 7px;
		font-size: 19px;
	}
	.tree-row {
		display: flex;
		align-items: center;
		height: 22px;
	}
	.node {
		display: flex;
		align-items: center;
		gap: 7px;
		height: 22px;
		padding: 0 9px 0 2px;
		background: linear-gradient(#f2f2f2, #dcdcdc);
		border: solid #b2bcc6;
		border-width: 1px 0;
		white-space: nowrap;
		line-height: 20px;
	}
	.tree-row:nth-child(-n + 2) .node {
		font-size: 17px;
	}
	.node svg {
		width: 22px;
		height: 20px;
	}
	.node .lock {
		width: 18px;
	}
	.dim {
		color: #8a8a8a;
	}
	.bold {
		font-size: 20px;
		font-weight: bold;
	}
	.active {
		width: 280px;
		background: linear-gradient(#e9a637, #ffc95e 60%, #eba93a);
		border-color: #cf8d22;
	}
	.node .pointer {
		width: 24px;
		height: 16px;
		margin-left: auto;
		margin-right: 8px;
	}
	.expander {
		width: 14px;
		height: 14px;
		margin-right: 12px;
		background: linear-gradient(#333, #333) center / 8px 2px no-repeat #dedede;
		border: 1px solid #aaa;
	}
	input[type='checkbox'] {
		appearance: none;
		position: relative;
		width: 17px;
		height: 16px;
		margin: 0 10px 0 0;
		background: #fafafa;
		border: 1px solid #2c4668;
	}
	input[type='checkbox']:checked::after {
		content: '';
		position: absolute;
		left: 4px;
		top: 0;
		width: 6px;
		height: 10px;
		border: solid #14285a;
		border-width: 0 3px 3px 0;
		transform: rotate(40deg);
	}
	.mixed::after {
		content: '';
		position: absolute;
		inset: 2px 3px;
		background: #999;
	}

	/* banner */
	.banner {
		position: absolute;
		z-index: 3;
		left: 0;
		top: 0;
		width: 653px;
		height: 157px;
		background: #004793;
		border-radius: 0 0 36px 0;
		color: #fff;
		display: flex;
		align-items: center;
		padding-left: 72px;
	}
	.notch {
		position: absolute;
		left: 100%;
		top: 0;
		width: 36px;
		height: 36px;
		background: radial-gradient(circle at 100% 100%, transparent 36px, #004793 37px);
	}
	.uds {
		width: 126px;
		font: italic 900 64px Roboto, 'Liberation Sans', sans-serif;
		line-height: 72px;
	}
	.company {
		width: 208px;
	}
	.company-name {
		border-bottom: 2px solid #fff;
		padding: 0 0 4px 8px;
		font-size: 33px;
		line-height: 38px;
		white-space: nowrap;
	}
	.slogan {
		padding: 5px 5px 0 0;
		text-align: right;
		font: italic bold 14px 'DejaVu Sans', sans-serif;
		line-height: 15px;
		white-space: nowrap;
	}
	.qingyi {
		position: relative;
		height: 88px;
		margin-left: 45px;
		padding-left: 28px;
		border-left: 1px solid #fff;
	}
	.qingyi svg {
		width: 100px;
		height: 97px;
		margin-top: -4px;
	}
	.qingyi-name {
		position: absolute;
		left: 56px;
		bottom: 0;
		display: flex;
		align-items: center;
		font-size: 12px;
		line-height: 16px;
		white-space: nowrap;
	}
	.qingyi-name b {
		font: bold 17px 'Open Sans', sans-serif;
		line-height: 16px;
	}
</style>
